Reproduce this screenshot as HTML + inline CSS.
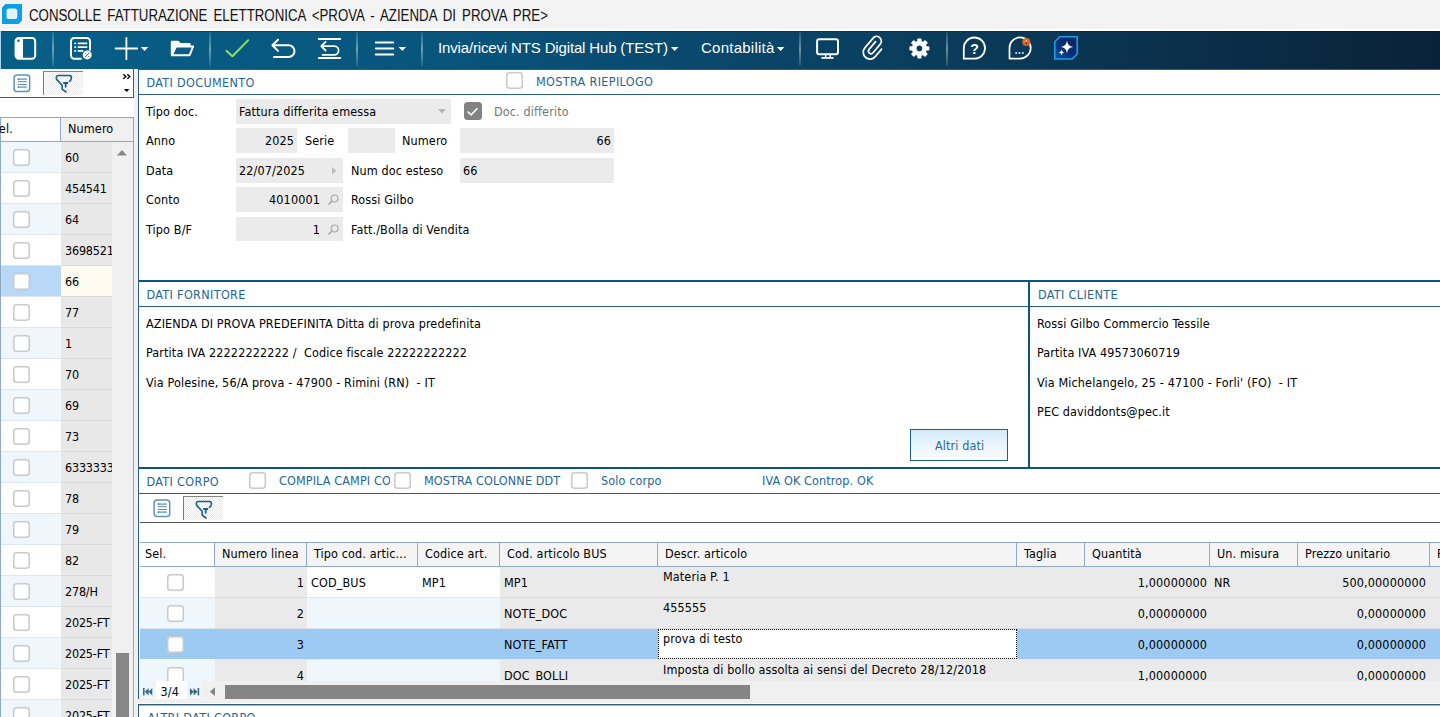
<!DOCTYPE html><html><head><meta charset="utf-8"><title>Consolle fatturazione elettronica</title><style>
*{box-sizing:border-box;margin:0;padding:0}
html,body{width:1440px;height:717px;overflow:hidden;background:#fff}
body{position:relative;font-family:"DejaVu Sans Condensed","DejaVu Sans","Liberation Sans",sans-serif;font-size:12.5px;font-stretch:condensed;color:#000;letter-spacing:.12px}
.a{position:absolute;white-space:nowrap}
.t{position:absolute;white-space:nowrap;line-height:16px;height:16px}
.hd{color:#26658f}
.hw{letter-spacing:.34px}
.fld{position:absolute;background:#ebebeb}
.cb{position:absolute;width:17.300px;height:17.300px;border-radius:3.800px;background:#fff;box-shadow:inset 0 0 0 1.500px #cacaca,0 0 .800px rgba(0,0,0,.18)}
.seg{font-family:"Liberation Sans",sans-serif;letter-spacing:0}
.r{text-align:right}
</style></head><body>
<div class="a" style="left:0px;top:0px;width:1440px;height:29px;background:#f3f3f3;"></div>
<div class="a" style="left:0px;top:29px;width:1440px;height:2px;background:#ffffff;"></div>
<svg class="a" style="left:2px;top:4px" width="20" height="20" viewBox="0 0 20 20"><path d="M3.5 0H20V16.5L16.5 20H0V3.5Z" fill="#0c9ee6"/><rect x="4.500" y="4.600" width="10.800" height="10.400" rx="2.600" fill="#e3f4fd"/></svg>
<div class="t seg" style="left:29px;top:5.600px;font-size:16px;line-height:20px;height:20px;color:#111;word-spacing:2.8px;transform:scaleX(.83);transform-origin:0 0">CONSOLLE FATTURAZIONE ELETTRONICA &lt;PROVA - AZIENDA DI PROVA PRE&gt;</div>
<div class="a" style="left:0px;top:31px;width:1px;height:38px;background:#a9d6ee;"></div>
<div class="a" style="left:1px;top:31px;width:1439px;height:38px;background:linear-gradient(90deg,#075f88 0%,#08557c 30%,#0a476b 50%,#0a3957 70%,#0a2239 100%);"></div>
<div class="a" style="left:1px;top:31px;width:1439px;height:1px;background:rgba(0,0,0,.18);"></div>
<div class="a" style="left:52px;top:32px;width:2px;height:34px;background:linear-gradient(180deg,rgba(255,255,255,.10),rgba(255,255,255,.42) 50%,rgba(255,255,255,.10));"></div>
<div class="a" style="left:209px;top:32px;width:2px;height:34px;background:linear-gradient(180deg,rgba(255,255,255,.10),rgba(255,255,255,.42) 50%,rgba(255,255,255,.10));"></div>
<div class="a" style="left:356px;top:32px;width:2px;height:34px;background:linear-gradient(180deg,rgba(255,255,255,.10),rgba(255,255,255,.42) 50%,rgba(255,255,255,.10));"></div>
<div class="a" style="left:421px;top:32px;width:2px;height:34px;background:linear-gradient(180deg,rgba(255,255,255,.10),rgba(255,255,255,.42) 50%,rgba(255,255,255,.10));"></div>
<div class="a" style="left:799px;top:32px;width:2px;height:34px;background:linear-gradient(180deg,rgba(255,255,255,.10),rgba(255,255,255,.42) 50%,rgba(255,255,255,.10));"></div>
<div class="a" style="left:946px;top:32px;width:2px;height:34px;background:linear-gradient(180deg,rgba(255,255,255,.10),rgba(255,255,255,.42) 50%,rgba(255,255,255,.10));"></div>
<div class="t seg" style="left:438px;top:38px;font-size:15px;line-height:20px;height:20px;color:#fff;letter-spacing:-.15px">Invia/ricevi NTS Digital Hub (TEST)</div>
<div class="t seg" style="left:701px;top:38px;font-size:15px;line-height:20px;height:20px;color:#fff;letter-spacing:.25px">Contabilità</div>
<svg class="a" style="left:0;top:31px" width="1440" height="38" viewBox="0 31 1440 38" fill="none" stroke="#fff" stroke-width="2" stroke-linecap="round" stroke-linejoin="round">
<!-- sidebar -->
<rect x="15.6" y="38" width="19.6" height="20.8" rx="3.2"/>
<path d="M15.6 41.2a3.2 3.2 0 0 1 3.2-3.2h4.2v20.8h-4.2a3.2 3.2 0 0 1-3.2-3.2z" fill="#fff" stroke="none"/>
<circle cx="18.5" cy="40.8" r="1.2" fill="#0a5f88" stroke="none"/>
<!-- list doc -->
<path d="M81 58.8H74.2a3.2 3.2 0 0 1-3.2-3.2V41.2a3.2 3.2 0 0 1 3.2-3.2h12.6a3.2 3.2 0 0 1 3.2 3.2V50"/>
<g stroke-width="1.7"><path d="M78.4 43.3H86.6M78.4 47.1H86.6M78.4 50.9H82.6"/><path d="M75 43.3h.4M75 47.1h.4M75 50.9h.4"/></g>
<circle cx="87.2" cy="54.9" r="4.5" fill="#fff" stroke="none"/>
<path d="M85.3 56.8l3.8-3.8M85.6 53.4h.1M88.8 56.5h.1" stroke="#0a5f88" stroke-width="1"/>
<!-- plus -->
<path d="M115.6 48.5H137.2M126.4 37.8V59.2" stroke-width="1.8"/>
<path d="M140.8 46.9h7.5l-3.75 4.2z" fill="#fff" stroke="none"/>
<!-- folder -->
<path d="M171.8 55.3V41.7h6.2l2.2 2.4h9.4v2.4" fill="#fff"/>
<path d="M171.9 55.3l4-8.7h17.2l-3.6 8.7z" fill="#0a5c85"/>
<!-- check -->
<path d="M226.6 50.9l5.8 5.4l15.8-16" stroke="#8be05a"/>
<!-- undo -->
<path d="M278 39.7l-5.6 5.5l5.6 5.7M272.8 45.2h15.8a5.9 5.9 0 0 1 0 11.8h-14.6"/>
<!-- undo all -->
<path d="M318.8 38.9H340.2M318.8 58H340.2"/>
<path d="M325.6 41.9l-4.4 4.3l4.4 4.3M321.6 46.2h12.7a4.3 4.3 0 0 1 0 8.6h-11.8" stroke-width="1.8"/>
<!-- hamburger -->
<path d="M375.8 42.4H393.2M375.8 48.5H393.2M375.8 54.6H393.2"/>
<path d="M398.6 46.9h7.5l-3.75 4.2z" fill="#fff" stroke="none"/>
<path d="M671 46.9h7.5l-3.75 4.2z" fill="#fff" stroke="none"/>
<path d="M776.9 46.9h7.5l-3.75 4.2z" fill="#fff" stroke="none"/>
<!-- monitor -->
<rect x="817.1" y="39.2" width="20.9" height="15.1" rx="2"/>
<path d="M825.6 55v2.6M830.2 55v2.6" stroke-width="1.4"/><path d="M822 57.9H833" stroke-width="1.6"/>
<!-- paperclip -->
<g transform="translate(873.4 48.3) rotate(40)"><path d="M-2.6 -6.5V3.6a2.6 2.6 0 0 0 5.2 0V-7.6a4.7 4.7 0 0 0-9.4 0V5.2a6.8 6.8 0 0 0 13.6 0V-4.6" stroke-width="1.7"/></g>
<!-- gear -->
<g transform="translate(919.4 48.4)" fill="#fff" stroke="none"><circle r="7.6"/>
<rect x="-2.1" y="-10" width="4.2" height="20" rx=".8"/><rect x="-10" y="-2.1" width="20" height="4.2" rx=".8"/><g transform="rotate(45)"><rect x="-2.1" y="-10" width="4.2" height="20" rx=".8"/><rect x="-10" y="-2.1" width="20" height="4.2" rx=".8"/></g><circle r="2.8" fill="#0b3b5e"/></g>
<!-- help -->
<path d="M963.8 58.7V48.5a10.6 10.6 0 1 1 10.6 10.2z" stroke-width="1.8"/>
<!-- chat -->
<path d="M1009.5 58.6V48.3a10.6 10.6 0 1 1 10.6 10.3z" stroke-width="1.7"/>
<path d="M1016.2 53h.1M1019.5 53h.1M1022.8 53h.1" stroke-width="1.7" stroke-linecap="square"/>
<circle cx="1026.3" cy="42.1" r="4" fill="#e8641c" stroke="none"/>
<path d="M1026.400 40.300v1.400" stroke="#fbd9c4" stroke-width="1.100"/><path d="M1026.400 42.600v1.300" stroke="#7a1d05" stroke-width="1.200"/>
<!-- ai -->
<defs><linearGradient id="aig" x1="0" y1="1" x2="1" y2="0"><stop offset="0" stop-color="#0c5aa8"/><stop offset=".45" stop-color="#0a2d74"/><stop offset="1" stop-color="#0b2560"/></linearGradient></defs>
<path d="M1059.8 36.8H1077.2V54l-5.2 5H1054.8V41.8z" fill="url(#aig)" stroke="#1b9be8" stroke-width="1.6" stroke-linejoin="miter"/>
<path d="M1067 40.6c.7 4 2 5.600 6.200 6.400c-4.200.8-5.500 2.400-6.200 6.400c-.7-4-2-5.600-6.200-6.400c4.200-.8 5.500-2.400 6.200-6.400z" fill="#fff" stroke="none"/>
<path d="M1061.500 49.600c.35 1.900 1 2.600 2.900 2.950c-1.900.35-2.550 1-2.900 2.950c-.35-1.950-1-2.600-2.900-2.950c1.900-.35 2.550-1.050 2.900-2.950z" fill="#fff" stroke="none"/>
</svg>
<div class="t seg" style="left:970.300px;top:41px;font-size:14px;line-height:16px;font-weight:bold;color:#fff">?</div>
<div class="a" style="left:0px;top:69px;width:134px;height:29px;background:#fff;border-right:1px solid #555;border-bottom:1px solid #555"></div>
<svg class="a" style="left:13px;top:74px" width="18" height="19" viewBox="0 0 18 19" fill="none"><rect x="1.1" y="1" width="15.6" height="16.6" rx="3" stroke="#5f93b3" stroke-width="1.5"/><path d="M4.8 5.100H13.8M4.8 13.100H13.8" stroke="#7db3d0" stroke-width="1.8"/><path d="M4.8 7.700H13.8M4.8 10.500H13.8" stroke="#5a87a3" stroke-width="1"/><path d="M4.8 5.100h1.2M4.8 13.100h1.2" stroke="#5a87a3" stroke-width="1.6"/></svg>
<div class="a" style="left:43px;top:71px;width:40px;height:24px;border-left:1px solid #7a7a7a;border-top:1px solid #858585;background:repeating-conic-gradient(#ffffff 0 25%,#ebebeb 0 50%) 0 0/2px 2px"></div><svg class="a" style="left:55px;top:74px" width="19" height="20" viewBox="0 0 19 20" fill="none" stroke="#1a5f85" stroke-width="1.6" stroke-linecap="round" stroke-linejoin="round"><path d="M14.400 7.400C16.400 6.300 17.600 1.500 14.600 1.500H3.400C1 1.500 .9 4.200 1.800 5.600L7.150 11.200V15.200L11 18"/><path d="M8.200 9H13.100M10.700 9.200V13.600" stroke-linecap="butt" stroke-width="1.8"/></svg>
<svg class="a" style="left:122px;top:73px" width="10" height="20" viewBox="0 0 10 20" fill="none" stroke="#000" stroke-width="1.4"><path d="M1.300 1.300L3.800 3.500L1.300 5.700M5.300 1.300L7.800 3.500L5.300 5.700"/><path d="M2 16H7.400L4.700 19z" fill="#000" stroke="none"/></svg>
<div class="a" style="left:134px;top:69px;width:4px;height:648px;background:#f0f0f0;"></div>
<div class="a" style="left:0px;top:98px;width:134px;height:619px;background:#fff;"></div>
<div class="a" style="left:0px;top:117px;width:134px;height:25px;background:#fff;border:1px solid #8fa8c4"></div>
<div class="a" style="left:60px;top:118px;width:73px;height:23px;background:#f0f0f0;border-left:1px solid #8fa8c4"></div>
<div class="t " style="left:-8.4px;top:121px;">Sel.</div>
<div class="t " style="left:68px;top:121px;">Numero</div>
<div class="a" style="left:112px;top:142px;width:21px;height:575px;background:#f0f0f0;"></div>
<div class="a" style="left:133px;top:142px;width:1px;height:575px;background:#8fa8c4;"></div>
<div class="a" style="left:0px;top:142px;width:1px;height:575px;background:#8fa8c4;"></div>
<div class="a" style="left:1px;top:142px;width:60px;height:30px;background:#eff7fd;"></div>
<div class="a" style="left:61px;top:142px;width:51px;height:30px;background:#e8e8e8;"></div>
<div class="a" style="left:1px;top:172px;width:60px;height:1px;background:#dbe6f0;"></div>
<div class="a" style="left:61px;top:172px;width:51px;height:1px;background:#d9dadc;"></div>
<div class="cb" style="left:13px;top:149px"></div>
<div class="t" style="left:65px;top:150px;width:47px;overflow:hidden;letter-spacing:-.2px">60</div>
<div class="a" style="left:1px;top:173px;width:60px;height:30px;background:#fff;"></div>
<div class="a" style="left:61px;top:173px;width:51px;height:30px;background:#e8e8e8;"></div>
<div class="a" style="left:1px;top:203px;width:60px;height:1px;background:#dbe6f0;"></div>
<div class="a" style="left:61px;top:203px;width:51px;height:1px;background:#d9dadc;"></div>
<div class="cb" style="left:13px;top:180px"></div>
<div class="t" style="left:65px;top:181px;width:47px;overflow:hidden;letter-spacing:-.2px">454541</div>
<div class="a" style="left:1px;top:204px;width:60px;height:30px;background:#eff7fd;"></div>
<div class="a" style="left:61px;top:204px;width:51px;height:30px;background:#e8e8e8;"></div>
<div class="a" style="left:1px;top:234px;width:60px;height:1px;background:#dbe6f0;"></div>
<div class="a" style="left:61px;top:234px;width:51px;height:1px;background:#d9dadc;"></div>
<div class="cb" style="left:13px;top:211px"></div>
<div class="t" style="left:65px;top:212px;width:47px;overflow:hidden;letter-spacing:-.2px">64</div>
<div class="a" style="left:1px;top:235px;width:60px;height:30px;background:#fff;"></div>
<div class="a" style="left:61px;top:235px;width:51px;height:30px;background:#e8e8e8;"></div>
<div class="a" style="left:1px;top:265px;width:60px;height:1px;background:#dbe6f0;"></div>
<div class="a" style="left:61px;top:265px;width:51px;height:1px;background:#d9dadc;"></div>
<div class="cb" style="left:13px;top:242px"></div>
<div class="t" style="left:65px;top:243px;width:47px;overflow:hidden;letter-spacing:-.2px">3698521</div>
<div class="a" style="left:1px;top:266px;width:60px;height:30px;background:#b9d7f7;"></div>
<div class="a" style="left:61px;top:266px;width:51px;height:30px;background:#fffbf0;"></div>
<div class="a" style="left:1px;top:296px;width:60px;height:1px;background:#dbe6f0;"></div>
<div class="a" style="left:61px;top:296px;width:51px;height:1px;background:#d9dadc;"></div>
<div class="cb" style="left:13px;top:273px"></div>
<div class="t" style="left:65px;top:274px;width:47px;overflow:hidden;letter-spacing:-.2px">66</div>
<div class="a" style="left:1px;top:297px;width:60px;height:30px;background:#fff;"></div>
<div class="a" style="left:61px;top:297px;width:51px;height:30px;background:#e8e8e8;"></div>
<div class="a" style="left:1px;top:327px;width:60px;height:1px;background:#dbe6f0;"></div>
<div class="a" style="left:61px;top:327px;width:51px;height:1px;background:#d9dadc;"></div>
<div class="cb" style="left:13px;top:304px"></div>
<div class="t" style="left:65px;top:305px;width:47px;overflow:hidden;letter-spacing:-.2px">77</div>
<div class="a" style="left:1px;top:328px;width:60px;height:30px;background:#eff7fd;"></div>
<div class="a" style="left:61px;top:328px;width:51px;height:30px;background:#e8e8e8;"></div>
<div class="a" style="left:1px;top:358px;width:60px;height:1px;background:#dbe6f0;"></div>
<div class="a" style="left:61px;top:358px;width:51px;height:1px;background:#d9dadc;"></div>
<div class="cb" style="left:13px;top:335px"></div>
<div class="t" style="left:65px;top:336px;width:47px;overflow:hidden;letter-spacing:-.2px">1</div>
<div class="a" style="left:1px;top:359px;width:60px;height:30px;background:#fff;"></div>
<div class="a" style="left:61px;top:359px;width:51px;height:30px;background:#e8e8e8;"></div>
<div class="a" style="left:1px;top:389px;width:60px;height:1px;background:#dbe6f0;"></div>
<div class="a" style="left:61px;top:389px;width:51px;height:1px;background:#d9dadc;"></div>
<div class="cb" style="left:13px;top:366px"></div>
<div class="t" style="left:65px;top:367px;width:47px;overflow:hidden;letter-spacing:-.2px">70</div>
<div class="a" style="left:1px;top:390px;width:60px;height:30px;background:#eff7fd;"></div>
<div class="a" style="left:61px;top:390px;width:51px;height:30px;background:#e8e8e8;"></div>
<div class="a" style="left:1px;top:420px;width:60px;height:1px;background:#dbe6f0;"></div>
<div class="a" style="left:61px;top:420px;width:51px;height:1px;background:#d9dadc;"></div>
<div class="cb" style="left:13px;top:397px"></div>
<div class="t" style="left:65px;top:398px;width:47px;overflow:hidden;letter-spacing:-.2px">69</div>
<div class="a" style="left:1px;top:421px;width:60px;height:30px;background:#fff;"></div>
<div class="a" style="left:61px;top:421px;width:51px;height:30px;background:#e8e8e8;"></div>
<div class="a" style="left:1px;top:451px;width:60px;height:1px;background:#dbe6f0;"></div>
<div class="a" style="left:61px;top:451px;width:51px;height:1px;background:#d9dadc;"></div>
<div class="cb" style="left:13px;top:428px"></div>
<div class="t" style="left:65px;top:429px;width:47px;overflow:hidden;letter-spacing:-.2px">73</div>
<div class="a" style="left:1px;top:452px;width:60px;height:30px;background:#eff7fd;"></div>
<div class="a" style="left:61px;top:452px;width:51px;height:30px;background:#e8e8e8;"></div>
<div class="a" style="left:1px;top:482px;width:60px;height:1px;background:#dbe6f0;"></div>
<div class="a" style="left:61px;top:482px;width:51px;height:1px;background:#d9dadc;"></div>
<div class="cb" style="left:13px;top:459px"></div>
<div class="t" style="left:65px;top:460px;width:47px;overflow:hidden;letter-spacing:-.2px">6333333</div>
<div class="a" style="left:1px;top:483px;width:60px;height:30px;background:#fff;"></div>
<div class="a" style="left:61px;top:483px;width:51px;height:30px;background:#e8e8e8;"></div>
<div class="a" style="left:1px;top:513px;width:60px;height:1px;background:#dbe6f0;"></div>
<div class="a" style="left:61px;top:513px;width:51px;height:1px;background:#d9dadc;"></div>
<div class="cb" style="left:13px;top:490px"></div>
<div class="t" style="left:65px;top:491px;width:47px;overflow:hidden;letter-spacing:-.2px">78</div>
<div class="a" style="left:1px;top:514px;width:60px;height:30px;background:#eff7fd;"></div>
<div class="a" style="left:61px;top:514px;width:51px;height:30px;background:#e8e8e8;"></div>
<div class="a" style="left:1px;top:544px;width:60px;height:1px;background:#dbe6f0;"></div>
<div class="a" style="left:61px;top:544px;width:51px;height:1px;background:#d9dadc;"></div>
<div class="cb" style="left:13px;top:521px"></div>
<div class="t" style="left:65px;top:522px;width:47px;overflow:hidden;letter-spacing:-.2px">79</div>
<div class="a" style="left:1px;top:545px;width:60px;height:30px;background:#fff;"></div>
<div class="a" style="left:61px;top:545px;width:51px;height:30px;background:#e8e8e8;"></div>
<div class="a" style="left:1px;top:575px;width:60px;height:1px;background:#dbe6f0;"></div>
<div class="a" style="left:61px;top:575px;width:51px;height:1px;background:#d9dadc;"></div>
<div class="cb" style="left:13px;top:552px"></div>
<div class="t" style="left:65px;top:553px;width:47px;overflow:hidden;letter-spacing:-.2px">82</div>
<div class="a" style="left:1px;top:576px;width:60px;height:30px;background:#eff7fd;"></div>
<div class="a" style="left:61px;top:576px;width:51px;height:30px;background:#e8e8e8;"></div>
<div class="a" style="left:1px;top:606px;width:60px;height:1px;background:#dbe6f0;"></div>
<div class="a" style="left:61px;top:606px;width:51px;height:1px;background:#d9dadc;"></div>
<div class="cb" style="left:13px;top:583px"></div>
<div class="t" style="left:65px;top:584px;width:47px;overflow:hidden;letter-spacing:-.2px">278/H</div>
<div class="a" style="left:1px;top:607px;width:60px;height:30px;background:#fff;"></div>
<div class="a" style="left:61px;top:607px;width:51px;height:30px;background:#e8e8e8;"></div>
<div class="a" style="left:1px;top:637px;width:60px;height:1px;background:#dbe6f0;"></div>
<div class="a" style="left:61px;top:637px;width:51px;height:1px;background:#d9dadc;"></div>
<div class="cb" style="left:13px;top:614px"></div>
<div class="t" style="left:65px;top:615px;width:47px;overflow:hidden;letter-spacing:-.2px">2025-FT</div>
<div class="a" style="left:1px;top:638px;width:60px;height:30px;background:#eff7fd;"></div>
<div class="a" style="left:61px;top:638px;width:51px;height:30px;background:#e8e8e8;"></div>
<div class="a" style="left:1px;top:668px;width:60px;height:1px;background:#dbe6f0;"></div>
<div class="a" style="left:61px;top:668px;width:51px;height:1px;background:#d9dadc;"></div>
<div class="cb" style="left:13px;top:645px"></div>
<div class="t" style="left:65px;top:646px;width:47px;overflow:hidden;letter-spacing:-.2px">2025-FT</div>
<div class="a" style="left:1px;top:669px;width:60px;height:30px;background:#fff;"></div>
<div class="a" style="left:61px;top:669px;width:51px;height:30px;background:#e8e8e8;"></div>
<div class="a" style="left:1px;top:699px;width:60px;height:1px;background:#dbe6f0;"></div>
<div class="a" style="left:61px;top:699px;width:51px;height:1px;background:#d9dadc;"></div>
<div class="cb" style="left:13px;top:676px"></div>
<div class="t" style="left:65px;top:677px;width:47px;overflow:hidden;letter-spacing:-.2px">2025-FT</div>
<div class="a" style="left:1px;top:700px;width:60px;height:30px;background:#eff7fd;"></div>
<div class="a" style="left:61px;top:700px;width:51px;height:30px;background:#e8e8e8;"></div>
<div class="a" style="left:1px;top:730px;width:60px;height:1px;background:#dbe6f0;"></div>
<div class="a" style="left:61px;top:730px;width:51px;height:1px;background:#d9dadc;"></div>
<div class="cb" style="left:13px;top:707px"></div>
<div class="t" style="left:65px;top:708px;width:47px;overflow:hidden;letter-spacing:-.2px">2025-FT</div>
<svg class="a" style="left:117px;top:150px" width="10" height="6"><path d="M0 5.5L5 0L10 5.5Z" fill="#858585"/></svg>
<div class="a" style="left:116px;top:653px;width:13px;height:64px;background:#878787;"></div>
<div class="a" style="left:138px;top:69px;width:1px;height:648px;background:#2a5f80;"></div>
<div class="a" style="left:138px;top:69px;width:1302px;height:1px;background:#2a5f80;"></div>
<div class="t hd hw" style="left:146.5px;top:75px;">DATI DOCUMENTO</div>
<div class="a" style="left:139px;top:94px;width:1301px;height:1px;background:#2a5f80;"></div>
<div class="cb" style="left:506px;top:72px"></div>
<div class="t hd hw" style="left:536px;top:74px;">MOSTRA RIEPILOGO</div>
<div class="t " style="left:146px;top:104px;">Tipo doc.</div>
<div class="t " style="left:146px;top:133px;">Anno</div>
<div class="t " style="left:146px;top:163px;">Data</div>
<div class="t " style="left:146px;top:192px;">Conto</div>
<div class="t " style="left:146px;top:222px;">Tipo B/F</div>
<div class="a" style="left:236px;top:99px;width:214.5px;height:24.7px;background:#ebebeb;"></div>
<div class="t " style="left:239px;top:104px;">Fattura differita emessa</div>
<svg class="a" style="left:437.500px;top:109px" width="8" height="5"><path d="M0 0H8L4 4.5Z" fill="#b4b4be"/></svg>
<div class="a" style="left:464px;top:102.400px;width:17.500px;height:18px;border-radius:3.500px;background:#828282"><svg width="18" height="18" viewBox="0 0 18 18"><path d="M3.600 9.500L7.100 12.800L13.500 6.200" fill="none" stroke="#fff" stroke-width="1.600"/></svg></div>
<div class="t " style="left:494px;top:104px;color:#777">Doc. differito</div>
<div class="a" style="left:236px;top:128.3px;width:61px;height:24.4px;background:#ebebeb;"></div>
<div class="t r" style="left:236px;top:133px;width:58px;">2025</div>
<div class="t " style="left:305px;top:133px;">Serie</div>
<div class="a" style="left:348px;top:128.3px;width:47px;height:24.4px;background:#ebebeb;"></div>
<div class="t " style="left:402px;top:133px;">Numero</div>
<div class="a" style="left:460px;top:128.3px;width:154px;height:24.4px;background:#ebebeb;"></div>
<div class="t r" style="left:460px;top:133px;width:151px;">66</div>
<div class="a" style="left:236px;top:158px;width:107px;height:24.7px;background:#ebebeb;"></div>
<div class="t " style="left:239px;top:163px;">22/07/2025</div>
<svg class="a" style="left:332px;top:167px" width="5" height="8"><path d="M0 0L4.500 3.800L0 7.600Z" fill="#bcbcc6"/></svg>
<div class="t " style="left:351px;top:163px;">Num doc esteso</div>
<div class="a" style="left:460px;top:158px;width:154px;height:24.7px;background:#ebebeb;"></div>
<div class="t " style="left:463px;top:163px;">66</div>
<div class="a" style="left:236px;top:187.2px;width:107px;height:24.5px;background:#ebebeb;"></div>
<div class="t r" style="left:236px;top:192px;width:84px;">4010001</div>
<div class="t " style="left:351px;top:192px;">Rossi Gilbo</div>
<div class="a" style="left:236px;top:217.2px;width:107px;height:24.3px;background:#ebebeb;"></div>
<div class="t r" style="left:236px;top:222px;width:84px;">1</div>
<div class="t " style="left:351px;top:222px;">Fatt./Bolla di Vendita</div>
<svg class="a" style="left:328px;top:194px" width="11" height="11" viewBox="0 0 11 11"><circle cx="6.600" cy="4.400" r="3.400" fill="none" stroke="#a9aab4" stroke-width="1.200"/><path d="M4.200 6.900L.400 10.500" stroke="#a9aab4" stroke-width="1.500"/></svg>
<svg class="a" style="left:328px;top:224px" width="11" height="11" viewBox="0 0 11 11"><circle cx="6.600" cy="4.400" r="3.400" fill="none" stroke="#a9aab4" stroke-width="1.200"/><path d="M4.200 6.900L.400 10.500" stroke="#a9aab4" stroke-width="1.500"/></svg>
<div class="a" style="left:139px;top:280px;width:1301px;height:2px;background:#0b5580;"></div>
<div class="t hd hw" style="left:146.5px;top:287px;">DATI FORNITORE</div>
<div class="a" style="left:139px;top:306px;width:1301px;height:1px;background:#2a5f80;"></div>
<div class="a" style="left:1028px;top:282px;width:2px;height:185px;background:#0b5580;"></div>
<div class="t hd hw" style="left:1038px;top:287px;">DATI CLIENTE</div>
<div class="t" style="left:146px;top:316px;white-space:pre">AZIENDA DI PROVA PREDEFINITA Ditta di prova predefinita</div>
<div class="t" style="left:146px;top:345px;white-space:pre">Partita IVA 22222222222 /  Codice fiscale 22222222222</div>
<div class="t" style="left:146px;top:375px;white-space:pre">Via Polesine, 56/A prova - 47900 - Rimini (RN)  - IT</div>
<div class="t" style="left:1037px;top:316px;white-space:pre">Rossi Gilbo Commercio Tessile</div>
<div class="t" style="left:1037px;top:345px;white-space:pre">Partita IVA 49573060719</div>
<div class="t" style="left:1037px;top:375px;white-space:pre">Via Michelangelo, 25 - 47100 - Forli&#x27; (FO)  - IT</div>
<div class="t" style="left:1037px;top:404px;white-space:pre">PEC daviddonts@pec.it</div>
<div class="a" style="left:910px;top:429px;width:98px;height:32px;border:1px solid #1d5f88;background:linear-gradient(#d3eafb,#eaf5fd 50%,#fbfdff)"></div>
<div class="t " style="left:935px;top:438px;color:#2a6a96">Altri dati</div>
<div class="a" style="left:139px;top:467px;width:1301px;height:2px;background:#0b5580;"></div>
<div class="t hd hw" style="left:146.5px;top:474px;">DATI CORPO</div>
<div class="cb" style="left:249px;top:472px"></div>
<div class="t hd" style="left:279px;top:473px;width:110.500px;overflow:hidden">COMPILA CAMPI CODICE</div>
<div class="cb" style="left:394px;top:472px"></div>
<div class="t hd" style="left:424px;top:473px;">MOSTRA COLONNE DDT</div>
<div class="cb" style="left:571px;top:472px"></div>
<div class="t hd" style="left:601px;top:473px;">Solo corpo</div>
<div class="t hd" style="left:762px;top:473px;">IVA OK Controp. OK</div>
<div class="a" style="left:139px;top:493px;width:1301px;height:1px;background:#2a5f80;"></div>
<div class="a" style="left:140px;top:522px;width:1300px;height:1px;background:#555;"></div>
<svg class="a" style="left:153px;top:499px" width="18" height="19" viewBox="0 0 18 19" fill="none"><rect x="1.1" y="1" width="15.6" height="16.6" rx="3" stroke="#5f93b3" stroke-width="1.5"/><path d="M4.8 5.100H13.8M4.8 13.100H13.8" stroke="#7db3d0" stroke-width="1.8"/><path d="M4.8 7.700H13.8M4.8 10.500H13.8" stroke="#5a87a3" stroke-width="1"/><path d="M4.8 5.100h1.2M4.8 13.100h1.2" stroke="#5a87a3" stroke-width="1.6"/></svg>
<div class="a" style="left:183px;top:496px;width:40px;height:24px;border-left:1px solid #7a7a7a;border-top:1px solid #858585;background:repeating-conic-gradient(#ffffff 0 25%,#ebebeb 0 50%) 0 0/2px 2px"></div><svg class="a" style="left:195.3px;top:499.7px" width="19" height="20" viewBox="0 0 19 20" fill="none" stroke="#1a5f85" stroke-width="1.6" stroke-linecap="round" stroke-linejoin="round"><path d="M14.400 7.400C16.400 6.300 17.600 1.500 14.600 1.500H3.400C1 1.500 .9 4.200 1.800 5.600L7.150 11.200V15.200L11 18"/><path d="M8.200 9H13.100M10.700 9.200V13.600" stroke-linecap="butt" stroke-width="1.8"/></svg>
<div class="a" style="left:140px;top:542px;width:1300px;height:25px;background:#f4f4f4;border-top:1px solid #8fa8c4;border-bottom:1px solid #8fa8c4"></div>
<div class="a" style="left:140px;top:543px;width:74px;height:23px;background:#fff;"></div>
<div class="t " style="left:145px;top:546px;">Sel.</div>
<div class="a" style="left:214px;top:543px;width:1px;height:23px;background:#8fa8c4;"></div>
<div class="t " style="left:222px;top:546px;">Numero linea</div>
<div class="a" style="left:306px;top:543px;width:1px;height:23px;background:#8fa8c4;"></div>
<div class="t " style="left:314px;top:546px;">Tipo cod. artic...</div>
<div class="a" style="left:417px;top:543px;width:1px;height:23px;background:#8fa8c4;"></div>
<div class="t " style="left:425px;top:546px;">Codice art.</div>
<div class="a" style="left:499px;top:543px;width:1px;height:23px;background:#8fa8c4;"></div>
<div class="t " style="left:507px;top:546px;">Cod. articolo BUS</div>
<div class="a" style="left:657px;top:543px;width:1px;height:23px;background:#8fa8c4;"></div>
<div class="t " style="left:665px;top:546px;">Descr. articolo</div>
<div class="a" style="left:1016px;top:543px;width:1px;height:23px;background:#8fa8c4;"></div>
<div class="t " style="left:1024px;top:546px;">Taglia</div>
<div class="a" style="left:1084px;top:543px;width:1px;height:23px;background:#8fa8c4;"></div>
<div class="t " style="left:1092px;top:546px;">Quantità</div>
<div class="a" style="left:1209px;top:543px;width:1px;height:23px;background:#8fa8c4;"></div>
<div class="t " style="left:1217px;top:546px;">Un. misura</div>
<div class="a" style="left:1297px;top:543px;width:1px;height:23px;background:#8fa8c4;"></div>
<div class="t " style="left:1305px;top:546px;">Prezzo unitario</div>
<div class="a" style="left:1429px;top:543px;width:1px;height:23px;background:#8fa8c4;"></div>
<div class="t " style="left:1437px;top:546px;">P</div>
<div class="a" style="left:140px;top:567px;width:1300px;height:30px;background:#eaeaea;"></div>
<div class="a" style="left:140px;top:567px;width:75px;height:30px;background:#fff;"></div>
<div class="a" style="left:307px;top:567px;width:193px;height:30px;background:#fff;"></div>
<div class="a" style="left:140px;top:597px;width:1300px;height:1px;background:#d9dbde;"></div>
<div class="a" style="left:140px;top:597px;width:75px;height:1px;background:#dbe6f0;"></div>
<div class="a" style="left:307px;top:597px;width:193px;height:1px;background:#dbe6f0;"></div>
<div class="cb" style="left:167px;top:574px"></div>
<div class="t r" style="left:215px;top:575px;width:89px;">1</div>
<div class="t " style="left:311px;top:575px;">COD_BUS</div>
<div class="t " style="left:422px;top:575px;">MP1</div>
<div class="t " style="left:504px;top:575px;">MP1</div>
<div class="t " style="left:663px;top:569px;">Materia P. 1</div>
<div class="t r" style="left:1085px;top:575px;width:122px;">1,00000000</div>
<div class="t " style="left:1214px;top:575px;">NR</div>
<div class="t r" style="left:1298px;top:575px;width:128px;">500,00000000</div>
<div class="a" style="left:140px;top:598px;width:1300px;height:30px;background:#eaeaea;"></div>
<div class="a" style="left:140px;top:598px;width:75px;height:30px;background:#eff7fd;"></div>
<div class="a" style="left:307px;top:598px;width:193px;height:30px;background:#eff7fd;"></div>
<div class="a" style="left:140px;top:628px;width:1300px;height:1px;background:#d9dbde;"></div>
<div class="a" style="left:140px;top:628px;width:75px;height:1px;background:#dbe6f0;"></div>
<div class="a" style="left:307px;top:628px;width:193px;height:1px;background:#dbe6f0;"></div>
<div class="cb" style="left:167px;top:605px"></div>
<div class="t r" style="left:215px;top:606px;width:89px;">2</div>
<div class="t " style="left:311px;top:606px;"></div>
<div class="t " style="left:422px;top:606px;"></div>
<div class="t " style="left:504px;top:606px;">NOTE_DOC</div>
<div class="t " style="left:663px;top:600px;">455555</div>
<div class="t r" style="left:1085px;top:606px;width:122px;">0,00000000</div>
<div class="t " style="left:1214px;top:606px;"></div>
<div class="t r" style="left:1298px;top:606px;width:128px;">0,00000000</div>
<div class="a" style="left:140px;top:629px;width:1300px;height:30px;background:#9ccaf3;"></div>
<div class="cb" style="left:167px;top:636px"></div>
<div class="t r" style="left:215px;top:637px;width:89px;">3</div>
<div class="t " style="left:311px;top:637px;"></div>
<div class="t " style="left:422px;top:637px;"></div>
<div class="t " style="left:504px;top:637px;">NOTE_FATT</div>
<div class="a" style="left:658px;top:629px;width:359px;height:30px;background:#fff;border:1px dotted #000"></div>
<div class="t " style="left:663px;top:631px;">prova di testo</div>
<div class="t r" style="left:1085px;top:637px;width:122px;">0,00000000</div>
<div class="t " style="left:1214px;top:637px;"></div>
<div class="t r" style="left:1298px;top:637px;width:128px;">0,00000000</div>
<div class="a" style="left:140px;top:660px;width:1300px;height:30px;background:#eaeaea;"></div>
<div class="a" style="left:140px;top:660px;width:75px;height:30px;background:#eff7fd;"></div>
<div class="a" style="left:307px;top:660px;width:193px;height:30px;background:#eff7fd;"></div>
<div class="a" style="left:140px;top:690px;width:1300px;height:1px;background:#d9dbde;"></div>
<div class="a" style="left:140px;top:690px;width:75px;height:1px;background:#dbe6f0;"></div>
<div class="a" style="left:307px;top:690px;width:193px;height:1px;background:#dbe6f0;"></div>
<div class="a" style="left:139px;top:659px;width:76px;height:1px;background:#eff7fd;"></div>
<div class="a" style="left:215px;top:659px;width:1225px;height:1px;background:#eaeaea;"></div>
<div class="cb" style="left:167px;top:667px"></div>
<div class="t r" style="left:215px;top:668px;width:89px;">4</div>
<div class="t " style="left:311px;top:668px;"></div>
<div class="t " style="left:422px;top:668px;"></div>
<div class="t " style="left:504px;top:668px;">DOC_BOLLI</div>
<div class="t " style="left:663px;top:662px;">Imposta di bollo assolta ai sensi del Decreto 28/12/2018</div>
<div class="t r" style="left:1085px;top:668px;width:122px;">1,00000000</div>
<div class="t " style="left:1214px;top:668px;"></div>
<div class="t r" style="left:1298px;top:668px;width:128px;">0,00000000</div>
<div class="a" style="left:139px;top:681px;width:1301px;height:22px;background:#f0f0f0;"></div>
<div class="a" style="left:139px;top:681px;width:63px;height:18px;background:#eef6fc;"></div>
<div class="a" style="left:156px;top:681px;width:31px;height:18px;background:#fff;"></div>
<div class="t " style="left:160.5px;top:684px;">3/4</div>
<svg class="a" style="left:142px;top:687px" width="60" height="10" viewBox="142 687 60 10" fill="#3b6584"><rect x="143" y="688" width="1.6" height="7.4"/><path d="M148.600 688v7.400l-3.800-3.700zM152.300 688v7.400l-3.800-3.700z"/><rect x="197.600" y="688" width="1.600" height="7.400"/><path d="M193.600 688v7.400l3.800-3.700zM189.900 688v7.400l3.800-3.700z"/></svg>
<svg class="a" style="left:209px;top:687px" width="7" height="10" viewBox="0 0 7 10"><path d="M6 .3V9L.8 4.650z" fill="#858585"/></svg>
<div class="a" style="left:225px;top:685px;width:525px;height:14px;background:#858585;"></div>
<div class="a" style="left:138px;top:699px;width:1px;height:5px;background:#fff;"></div>
<div class="a" style="left:138px;top:704px;width:1302px;height:1px;background:#2a5f80;"></div>
<div class="a" style="left:139px;top:705px;width:1301px;height:1px;background:#9fbccd;"></div>
<div class="a" style="left:139px;top:706px;width:1301px;height:11px;background:#fff;"></div>
<div class="a" style="left:138px;top:704px;width:1px;height:13px;background:#2a5f80;"></div>
<div class="t hd hw" style="left:147.5px;top:710px;">ALTRI DATI CORPO</div>
</body></html>
